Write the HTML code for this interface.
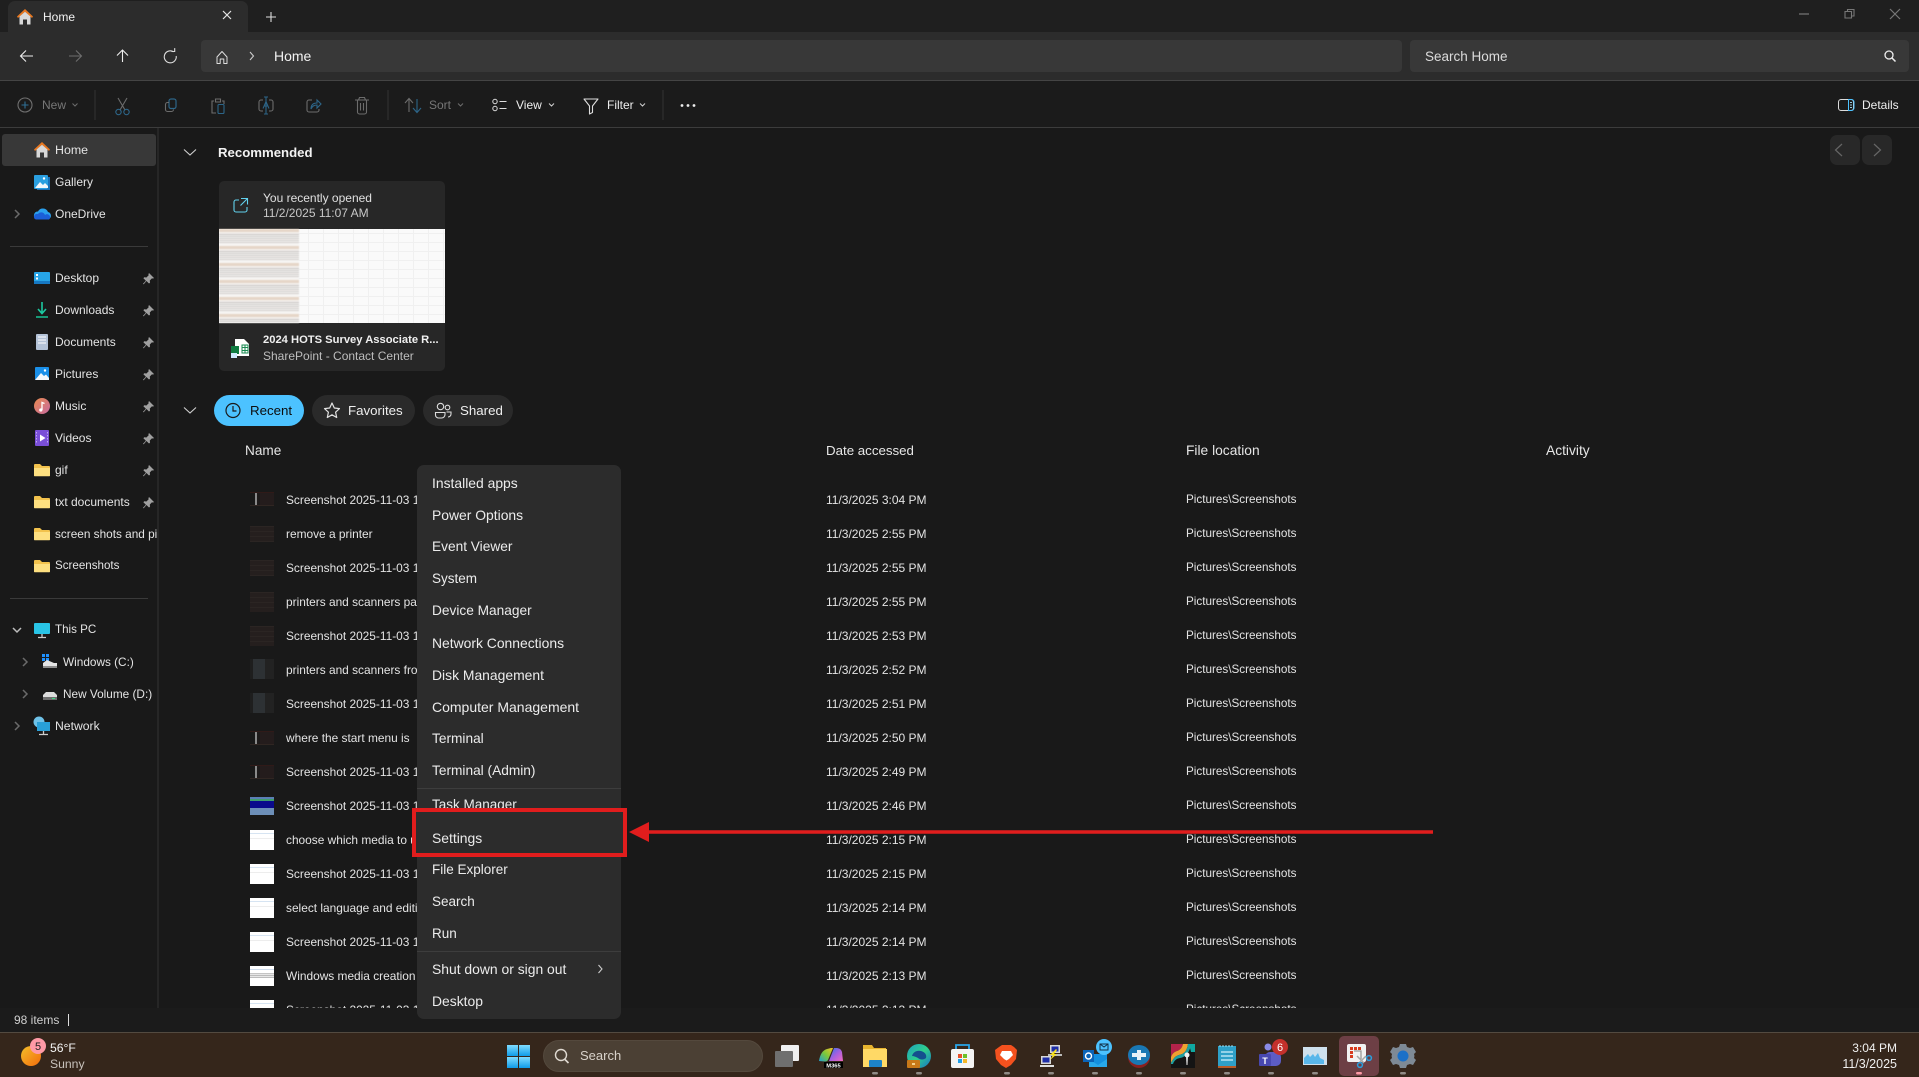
<!DOCTYPE html>
<html><head><meta charset="utf-8"><title>Home</title>
<style>
*{box-sizing:border-box;margin:0;padding:0}
html,body{width:1919px;height:1077px;overflow:hidden;background:#191919}
body{position:relative;font-family:"Liberation Sans",sans-serif;font-size:12px;color:#e4e4e4}
.b{position:absolute}
.t{position:absolute;line-height:16px;white-space:nowrap}
.r{position:absolute;left:0;width:1919px;height:34px}
.r span{position:absolute;top:9px;line-height:16px;white-space:nowrap}
.r .n{left:286px;width:135px;overflow:hidden;font-size:11.900px}
.r .d{left:826px}
.r .l{left:1186px;font-size:11.700px}
.r i{position:absolute;left:250px;display:block}
.dk{background:repeating-linear-gradient(180deg,#2b2523 0 1px,#251f1e 1px 5px);filter:blur(.3px)}
.gr{background:linear-gradient(90deg,#1e1e1e 0 3px,#2d3134 3px 15px,#222 15px 24px)}
.st{background:linear-gradient(90deg,#191919 0 5px,#8a8a8a 5px 7px,#1d1a1a 7px 10px,#241c1c 10px 24px);border-top:1px solid #301a18;border-bottom:1px solid #302622}
.wh{background:linear-gradient(180deg,#fff 0 3px,#d6e4f2 3px 4px,#fff 4px 8px,#ededed 8px 9px,#fff 9px 100%)}
.m{position:absolute;left:432px;line-height:16px;font-size:13.900px;color:#ececec;white-space:nowrap}
</style></head><body>

<!-- chrome -->
<div class="b" style="left:0;top:0;width:1919px;height:32px;background:#1f1f1f"></div>
<div class="b" style="left:8px;top:1px;width:240px;height:32px;background:#2c2c2c;border-radius:7px 7px 0 0"></div>
<div class="b" style="left:0;top:32px;width:1919px;height:48px;background:#2c2c2c"></div>
<div class="b" style="left:201px;top:40px;width:1201px;height:32px;background:#383838;border-radius:4px"></div>
<div class="b" style="left:1410px;top:40px;width:499px;height:32px;background:#383838;border-radius:4px"></div>
<div class="b" style="left:0;top:80px;width:1919px;height:1px;background:#444"></div>
<div class="b" style="left:0;top:81px;width:1919px;height:46px;background:#1b1b1b"></div>
<div class="b" style="left:0;top:127px;width:1919px;height:1px;background:#3c3c3c"></div>
<div class="b" style="left:157px;top:128px;width:2px;height:880px;background:#262626"></div>
<div class="b" style="left:2px;top:134px;width:154px;height:32px;background:#383838;border-radius:3px"></div>
<div class="b" style="left:10px;top:246px;width:138px;height:1px;background:#3a3a3a"></div>
<div class="b" style="left:10px;top:598px;width:138px;height:1px;background:#3a3a3a"></div>

<!-- card -->
<div class="b" style="left:219px;top:181px;width:226px;height:190px;background:#272727;border-radius:5px;overflow:hidden">
  <div class="b" style="left:0;top:48px;width:226px;height:94px;background:repeating-linear-gradient(90deg,transparent 0 14px,#f0f0f0 14px 15px),repeating-linear-gradient(0deg,#fafafa 0 8px,#f0f0f0 8px 9px)"></div>
  <div class="b" style="left:0;top:48px;width:80px;height:94px;filter:blur(.4px);background:repeating-linear-gradient(180deg,#e6d6c8 0 3px,#f2efec 3px 5px,#c9c6c4 5px 6px,#f2f0ee 6px 7px,#cfcdca 7px 8px,#f3f2f0 8px 9px,#cfccca 9px 10px,#f4f2f0 10px 11px,#d2cfcd 11px 12px,#f4f2f0 12px 13px,#d3d0ce 13px 14px,#f6f4f2 14px 17px)"></div>
</div>

<!-- pills -->
<div class="b" style="left:214px;top:395px;width:90px;height:31px;background:#4cc2ff;border-radius:16px"></div>
<div class="b" style="left:312px;top:395px;width:103px;height:31px;background:#2a2a2a;border-radius:16px"></div>
<div class="b" style="left:423px;top:395px;width:90px;height:31px;background:#2a2a2a;border-radius:16px"></div>

<!-- nav buttons -->
<div class="b" style="left:1830px;top:135px;width:30px;height:30px;background:#282828;border-radius:7px"></div>
<div class="b" style="left:1862px;top:135px;width:30px;height:30px;background:#282828;border-radius:7px"></div>

<!-- main icons -->
<svg class="b" style="left:0;top:0" width="1919" height="1077" viewBox="0 0 1919 1077" fill="none">
<defs>
<g id="folder"><path d="M0 3a1 1 0 0 1 1-1h5l2 2h7a1 1 0 0 1 1 1v8a1 1 0 0 1-1 1H1a1 1 0 0 1-1-1z" fill="#f2c24d"/><path d="M0 6h16v7.500a.8.8 0 0 1-.8.8H.8a.8.8 0 0 1-.8-.8z" fill="#fddf80"/></g>
<path id="pin" d="M6 0l5 5-1 .6-1-.4-2.200 2.300.2 2.200-1 .8-2.500-2.500L.6 11.400 0 10.800l2.900-3L.4 5.300l.8-1 2.200.2L5.700 2.200l-.3-1z" fill="#a0a0a0"/>
<g id="house"><path d="M8 0L16 7.500 15 9 8 2.800 1 9 0 7.500z" fill="#e8771f"/><path d="M2.500 7.500L8 2.800l5.500 4.700V15.500H10V10.500H6v5H2.500z" fill="#d8d8d8"/></g>
</defs>

<!-- tab/title -->
<use href="#house" x="17" y="9"/>
<path d="M223 11l8 8M231 11l-8 8" stroke="#e6e6e6" stroke-width="1.200"/>
<path d="M266 17h10M271 12v10" stroke="#dcdcdc" stroke-width="1.100"/>
<path d="M1799 14h10" stroke="#777" stroke-width="1.200"/>
<path d="M1845 11.500h6.500v6.500h-6.500zM1847.500 11.500v-2h6.500v6.500h-2.500" stroke="#777" stroke-width="1.100"/>
<path d="M1890 9l10 10M1900 9l-10 10" stroke="#777" stroke-width="1.200"/>

<!-- nav icons -->
<path d="M21 56h12M26 50.500L20.500 56 26 61.500" stroke="#eee" stroke-width="1.100"/>
<path d="M69 56h12M76 50.500L81.500 56 76 61.500" stroke="#6e6e6e" stroke-width="1.100"/>
<path d="M122.500 62V50M117 55.500l5.500-5.500 5.500 5.500" stroke="#eee" stroke-width="1.100"/>
<path d="M173.500 51.800a6 6 0 1 0 2.700 4.200M171.500 51.500h3.200v-3.400" stroke="#ddd" stroke-width="1.100"/>
<path d="M217 57l5-5.500 5 5.500v6.500h-3.200V59h-3.600v4.500H217z" stroke="#ddd" stroke-width="1" stroke-linejoin="round"/>
<path d="M250 52l3.500 4-3.500 4" stroke="#ccc" stroke-width="1.100"/>
<circle cx="1889" cy="55" r="4" stroke="#eee" stroke-width="1.300"/><path d="M1892 58l3.500 3.500" stroke="#eee" stroke-width="1.500"/>

<!-- toolbar icons -->
<circle cx="25" cy="105" r="7" stroke="#6f6f6f" stroke-width="1.100"/><path d="M21.500 105h7M25 101.500v7" stroke="#2f6f96" stroke-width="1.100"/>
<path d="M95 90v30M388 90v30M663 90v30" stroke="#333"/>
<path d="M118 98l7 12M127 98l-7 12" stroke="#6c6c6c" stroke-width="1.100"/><circle cx="118.500" cy="112" r="2.700" stroke="#2d6588" stroke-width="1.100"/><circle cx="126.500" cy="112" r="2.700" stroke="#2d6588" stroke-width="1.100"/>
<rect x="169" y="99" width="7" height="9.500" rx="2" stroke="#2d6588" stroke-width="1.200"/><path d="M169 102.500h-1.500a2 2 0 0 0-2 2v5a2 2 0 0 0 2 2h4a2 2 0 0 0 2-2" stroke="#6c6c6c" stroke-width="1.100"/>
<path d="M214 101h-2v12h4M222 101h2v3M215.500 99h5v3h-5z" stroke="#6c6c6c" stroke-width="1.100"/><rect x="218" y="104.500" width="6" height="9" rx="1" stroke="#2d6588" stroke-width="1.100"/>
<path d="M263 100h-2a2 2 0 0 0-2 2v7a2 2 0 0 0 2 2h2M269 100h2a2 2 0 0 1 2 2v7a2 2 0 0 1-2 2h-2" stroke="#6c6c6c" stroke-width="1.100"/><path d="M266 97v17M264 97h4M264 114h4" stroke="#2d6588" stroke-width="1.100"/><path d="M263 108.500l3-7 3 7M264 106h4" stroke="#2d6588" stroke-width="1"/>
<path d="M312 100h-3a2 2 0 0 0-2 2v8a2 2 0 0 0 2 2h8a2 2 0 0 0 2-2v-1" stroke="#6c6c6c" stroke-width="1.100"/><path d="M311 109c0-4 2-6 6-6v-3l4 4-4 4v-3c-3 0-4.500 1-6 4z" stroke="#2d6588" stroke-width="1.100"/>
<path d="M355 100h14M358.500 100l1-2.500h5l1 2.500M357.500 100v12a2 2 0 0 0 2 2h5a2 2 0 0 0 2-2v-12M360.500 103v7.500M363.500 103v7.500" stroke="#6c6c6c" stroke-width="1.100"/>
<path d="M409 112V99M405 103l4-4.500 4 4.500" stroke="#6c6c6c" stroke-width="1.100"/><path d="M417 99v13M413 108l4 4.500 4-4.500" stroke="#2d6588" stroke-width="1.100"/>
<circle cx="495" cy="101.500" r="2.200" stroke="#ddd"/><circle cx="495" cy="108.500" r="2.200" stroke="#ddd"/><path d="M499.500 101.500h7M499.500 108.500h7" stroke="#ddd" stroke-width="1.100"/>
<path d="M584 99h14l-5.500 7v6.500l-3 1.500v-8z" stroke="#ddd" stroke-width="1.100" stroke-linejoin="round"/>
<circle cx="682" cy="105.500" r="1.400" fill="#eee"/><circle cx="688" cy="105.500" r="1.400" fill="#eee"/><circle cx="694" cy="105.500" r="1.400" fill="#eee"/>
<path d="M72.500 103.500l2.500 2.500 2.500-2.500M458 103.500l2.500 2.500 2.500-2.500" stroke="#6c6c6c"/><path d="M549 103.500l2.500 2.500 2.500-2.500M640 103.500l2.500 2.500 2.500-2.500" stroke="#cfcfcf"/>
<rect x="1838.500" y="99.500" width="15" height="11" rx="2.500" stroke="#dcdcdc"/><path d="M1848.500 99.500h3a2.500 2.500 0 0 1 2.500 2.500v6a2.500 2.500 0 0 1-2.500 2.500h-3z" stroke="#4cc2ff"/><path d="M1850 102.500h2M1850 105h2M1850 107.500h2" stroke="#9cd" />

<!-- arrows recommended -->
<path d="M1842 144l-6.500 6 6.500 6" stroke="#666" stroke-width="1.200"/><path d="M1874 144l6.500 6-6.500 6" stroke="#666" stroke-width="1.200"/>
<path d="M184 149.500l6 5.500 6-5.500M184 407.500l6 5.500 6-5.500" stroke="#cfcfcf" stroke-width="1.100"/>

<!-- sidebar icons -->
<use href="#house" x="34" y="142"/>
<rect x="34" y="175" width="14" height="14" rx="1" fill="#2a9fe0"/><path d="M48 177h2v13H37v-1h11z" fill="#1a70b8"/><path d="M35 188l5-6 3 3 2-2 3 3v2H35z" fill="#f2f6fa"/><circle cx="44" cy="178.500" r="1.200" fill="#fff"/>
<path d="M36 219a4 4 0 0 1 2-7.500 5.500 5.500 0 0 1 10 0.500 3.800 3.800 0 0 1 1 7z" fill="#2aa0ee"/><path d="M34 217a3 3 0 0 1 4-3 4 4 0 0 1 7 1 3 3 0 0 1 5 2.500 2 2 0 0 1-1 2H36a2.500 2.500 0 0 1-2-2.500z" fill="#1b5fd8"/>
<path d="M15 210l4 4-4 4" stroke="#6a6a6a" stroke-width="1.500"/>
<rect x="34" y="272" width="16" height="12" rx="1" fill="#27a5e8"/><path d="M34 281h16v3H34z" fill="#1678c2"/><rect x="36" y="274" width="2" height="2" fill="#fff"/><rect x="36" y="277.500" width="2" height="2" fill="#fff"/>
<path d="M42 302v11M38 309l4 4.500 4-4.500" stroke="#1cc8a0" stroke-width="1.600"/><path d="M36 317h12" stroke="#18b98e" stroke-width="1.600"/>
<rect x="36" y="334" width="12" height="16" rx="1" fill="#b4c3d8"/><path d="M38 337h8M38 340h8M38 343h8" stroke="#fff" stroke-width="1.100"/>
<rect x="35" y="367" width="14" height="13" rx="1" fill="#1a8fe8"/><path d="M35 380l6-7 3 3 2-1.500 3 3.500v2z" fill="#f3f7fb"/><circle cx="45" cy="370.500" r="1.200" fill="#fff"/>
<defs><linearGradient id="mu" x1="0" y1="0" x2="1" y2="1"><stop offset="0" stop-color="#e88a4e"/><stop offset="1" stop-color="#c76aa0"/></linearGradient></defs>
<circle cx="42" cy="406" r="8" fill="url(#mu)"/><path d="M42 410V402.500l2.500 1" stroke="#fff" stroke-width="1.300"/><circle cx="40.800" cy="410" r="1.600" fill="#fff"/>
<rect x="35" y="430" width="14" height="16" rx="1" fill="#7a4fd8"/><path d="M40 434.500v7l5.500-3.500z" fill="#fff"/><path d="M36.500 432v12M47.500 432v12" stroke="#bfa8f0" stroke-dasharray="1.500 1.500"/>
<use href="#folder" x="34" y="462"/><use href="#folder" x="34" y="494"/><use href="#folder" x="34" y="526"/><use href="#folder" x="34" y="558"/>
<use href="#pin" x="143" y="273"/><use href="#pin" x="143" y="305"/><use href="#pin" x="143" y="337"/><use href="#pin" x="143" y="369"/><use href="#pin" x="143" y="401"/><use href="#pin" x="143" y="433"/><use href="#pin" x="143" y="465"/><use href="#pin" x="143" y="497"/>
<path d="M13 628l4 4 4-4" stroke="#bdbdbd" stroke-width="1.500"/>
<rect x="34" y="623" width="16" height="11" rx="1" fill="#29c4e6"/><path d="M42 634v3M38 637.500h8" stroke="#ccc" stroke-width="1.300"/>
<path d="M23 658l4 4-4 4M23 690l4 4-4 4M15 722l4 4-4 4" stroke="#6a6a6a" stroke-width="1.500"/>
<rect x="42" y="654" width="3" height="3" fill="#1e90ff"/><rect x="46" y="654" width="3" height="3" fill="#1e90ff"/><rect x="42" y="658" width="3" height="3" fill="#1e90ff"/><rect x="46" y="658" width="3" height="3" fill="#1e90ff"/>
<path d="M47 660l7 3h3v5H43v-5z" fill="#e4e4e4"/><path d="M43 666h14v2H43z" fill="#8d8d8d"/>
<path d="M46 692h8l3 3v5H43v-5z" fill="#dcdcdc"/><path d="M43 697h14v3H43z" fill="#6e6e6e"/><path d="M52 698.500h3" stroke="#3ddc84"/>
<circle cx="39" cy="722" r="5.500" fill="#6fc2e8"/><rect x="37" y="722" width="13" height="9" fill="#29a0d8"/><path d="M43.500 731v3M39 734.500h9" stroke="#ccc" stroke-width="1.300"/>

<!-- card icons -->
<path d="M239 200h-3a2 2 0 0 0-2 2v8a2 2 0 0 0 2 2h9a2 2 0 0 0 2-2v-3M241 198.500h6.500v6M247.500 198.500l-7 7" stroke="#62d2ee" stroke-width="1.100"/>
<path d="M235 339h9l5 5v12h-14z" fill="#fff"/><rect x="231" y="346" width="8" height="8" fill="#107c41"/><rect x="231" y="353" width="6" height="5" fill="#cfeaff"/><path d="M242 345h6v8h-6zM242 347.500h6M242 350.500h6M245 345v8" stroke="#1a8a50"/>

<!-- pill icons -->
<circle cx="233" cy="410.500" r="7" stroke="#1a1a1a" stroke-width="1.200"/><path d="M233 406v5h3.500" stroke="#1a1a1a" stroke-width="1.200"/>
<path d="M332 403l2.300 5 5.200.6-3.900 3.600 1.100 5.300-4.700-2.700-4.700 2.700 1.100-5.300-3.900-3.600 5.200-.6z" stroke="#e2e2e2" stroke-width="1.200" stroke-linejoin="round"/>
<circle cx="440.500" cy="406.500" r="3.200" stroke="#ddd" stroke-width="1.100"/><circle cx="447.500" cy="407.500" r="2.300" stroke="#ddd" stroke-width="1.100"/><path d="M435.500 412.500h9.500v2a3.500 3.500 0 0 1-3.500 3.500h-3a3 3 0 0 1-3-3zM446.500 412h4.500v2a3 3 0 0 1-3 3" stroke="#ddd" stroke-width="1.100"/>
</svg>

<!-- title/nav text -->
<div class="t" style="left:43px;top:9px;color:#f2f2f2">Home</div>
<div class="t" style="left:274px;top:48px;font-size:14px;color:#f2f2f2">Home</div>
<div class="t" style="left:1425px;top:49px;font-size:13.500px;color:#dcdcdc">Search Home</div>

<!-- toolbar text -->
<div class="t" style="left:42px;top:97px;color:#777">New</div>
<div class="t" style="left:429px;top:97px;color:#777">Sort</div>
<div class="t" style="left:516px;top:97px;color:#eee">View</div>
<div class="t" style="left:607px;top:97px;color:#eee">Filter</div>
<div class="t" style="left:1862px;top:97px;color:#eee">Details</div>

<!-- sidebar text -->
<div class="t" style="left:55px;top:142px;font-size:12.400px">Home</div>
<div class="t" style="left:55px;top:174px">Gallery</div>
<div class="t" style="left:55px;top:206px">OneDrive</div>
<div class="t" style="left:55px;top:270px">Desktop</div>
<div class="t" style="left:55px;top:302px">Downloads</div>
<div class="t" style="left:55px;top:334px">Documents</div>
<div class="t" style="left:55px;top:366px">Pictures</div>
<div class="t" style="left:55px;top:398px">Music</div>
<div class="t" style="left:55px;top:430px">Videos</div>
<div class="t" style="left:55px;top:462px">gif</div>
<div class="t" style="left:55px;top:494px">txt documents</div>
<div class="t" style="left:55px;top:526px;width:102px;overflow:hidden;font-size:11.800px">screen shots and pictures</div>
<div class="t" style="left:55px;top:558px;font-size:11.600px">Screenshots</div>
<div class="t" style="left:55px;top:622px;font-size:11.600px">This PC</div>
<div class="t" style="left:63px;top:654px;font-size:11.800px">Windows (C:)</div>
<div class="t" style="left:63px;top:686px;font-size:11.800px">New Volume (D:)</div>
<div class="t" style="left:55px;top:718px;font-size:12.200px">Network</div>

<!-- content heading -->
<div class="t" style="left:218px;top:145px;font-weight:bold;font-size:13.200px;color:#f2f2f2">Recommended</div>
<div class="t" style="left:263px;top:190px;color:#e0e0e0">You recently opened</div>
<div class="t" style="left:263px;top:205px;color:#c8c8c8">11/2/2025 11:07 AM</div>
<div class="t" style="left:263px;top:332px;font-weight:bold;font-size:11.200px;color:#f0f0f0">2024 HOTS Survey Associate R...</div>
<div class="t" style="left:263px;top:348px;color:#bdbdbd">SharePoint - Contact Center</div>
<div class="t" style="left:250px;top:403px;font-size:13.300px;color:#0d0d0d">Recent</div>
<div class="t" style="left:348px;top:403px;font-size:13.300px;color:#eee">Favorites</div>
<div class="t" style="left:460px;top:403px;font-size:13.300px;color:#eee">Shared</div>
<div class="t" style="left:245px;top:443px;font-size:13.600px;color:#e6e6e6">Name</div>
<div class="t" style="left:826px;top:443px;font-size:13.300px;color:#e6e6e6">Date accessed</div>
<div class="t" style="left:1186px;top:443px;font-size:13.800px;color:#e6e6e6">File location</div>
<div class="t" style="left:1546px;top:443px;font-size:13.800px;color:#e6e6e6">Activity</div>

<!-- rows -->
<div class="b" style="left:0;top:483px;width:1919px;height:525px;overflow:hidden">
<div class="r" style="top:0"><i class="st" style="top:9px;width:24px;height:14px"></i><span class="n">Screenshot 2025-11-03 150431</span><span class="d">11/3/2025 3:04 PM</span><span class="l">Pictures\Screenshots</span></div>
<div class="r" style="top:34px"><i class="dk" style="top:9px;width:24px;height:16px"></i><span class="n">remove a printer</span><span class="d">11/3/2025 2:55 PM</span><span class="l">Pictures\Screenshots</span></div>
<div class="r" style="top:68px"><i class="dk" style="top:9px;width:24px;height:16px"></i><span class="n">Screenshot 2025-11-03 145531</span><span class="d">11/3/2025 2:55 PM</span><span class="l">Pictures\Screenshots</span></div>
<div class="r" style="top:102px"><i class="dk" style="top:7px;width:24px;height:20px"></i><span class="n">printers and scanners page</span><span class="d">11/3/2025 2:55 PM</span><span class="l">Pictures\Screenshots</span></div>
<div class="r" style="top:136px"><i class="dk" style="top:7px;width:24px;height:20px"></i><span class="n">Screenshot 2025-11-03 145331</span><span class="d">11/3/2025 2:53 PM</span><span class="l">Pictures\Screenshots</span></div>
<div class="r" style="top:170px"><i class="gr" style="top:6px;width:24px;height:20px"></i><span class="n">printers and scanners from</span><span class="d">11/3/2025 2:52 PM</span><span class="l">Pictures\Screenshots</span></div>
<div class="r" style="top:204px"><i class="gr" style="top:6px;width:24px;height:20px"></i><span class="n">Screenshot 2025-11-03 145131</span><span class="d">11/3/2025 2:51 PM</span><span class="l">Pictures\Screenshots</span></div>
<div class="r" style="top:238px"><i class="st" style="top:10px;width:24px;height:14px"></i><span class="n">where the start menu is</span><span class="d">11/3/2025 2:50 PM</span><span class="l">Pictures\Screenshots</span></div>
<div class="r" style="top:272px"><i class="st" style="top:10px;width:24px;height:14px"></i><span class="n">Screenshot 2025-11-03 144931</span><span class="d">11/3/2025 2:49 PM</span><span class="l">Pictures\Screenshots</span></div>
<div class="r" style="top:306px"><i style="top:8px;width:24px;height:18px;background:linear-gradient(180deg,#5b7fb5 0 2px,#3f9c6e 2px 4px,#0a0a8c 4px 11px,#6d8fb8 11px 100%)"></i><span class="n">Screenshot 2025-11-03 144631</span><span class="d">11/3/2025 2:46 PM</span><span class="l">Pictures\Screenshots</span></div>
<div class="r" style="top:340px"><i class="wh" style="top:7px;width:24px;height:20px"></i><span class="n">choose which media to use</span><span class="d">11/3/2025 2:15 PM</span><span class="l">Pictures\Screenshots</span></div>
<div class="r" style="top:374px"><i class="wh" style="top:7px;width:24px;height:20px"></i><span class="n">Screenshot 2025-11-03 141531</span><span class="d">11/3/2025 2:15 PM</span><span class="l">Pictures\Screenshots</span></div>
<div class="r" style="top:408px"><i class="wh" style="top:7px;width:24px;height:20px"></i><span class="n">select language and edition</span><span class="d">11/3/2025 2:14 PM</span><span class="l">Pictures\Screenshots</span></div>
<div class="r" style="top:442px"><i class="wh" style="top:7px;width:24px;height:20px"></i><span class="n">Screenshot 2025-11-03 141431</span><span class="d">11/3/2025 2:14 PM</span><span class="l">Pictures\Screenshots</span></div>
<div class="r" style="top:476px"><i style="top:7px;width:24px;height:20px;background:linear-gradient(180deg,#fff 0 3px,#cfdcec 3px 4px,#fff 4px 7px,#c4c4c4 7px 8px,#e6e6e6 8px 9px,#bbb 9px 10px,#e6e6e6 10px 11px,#bbb 11px 12px,#fff 12px 100%)"></i><span class="n">Windows media creation</span><span class="d">11/3/2025 2:13 PM</span><span class="l">Pictures\Screenshots</span></div>
<div class="r" style="top:510px"><i class="wh" style="top:7px;width:24px;height:20px"></i><span class="n">Screenshot 2025-11-03 141331</span><span class="d">11/3/2025 2:13 PM</span><span class="l">Pictures\Screenshots</span></div>
</div>

<!-- status -->
<div class="b" style="left:0;top:1008px;width:1919px;height:24px;background:#1b1b1b"></div>
<div class="t" style="left:14px;top:1012px;color:#cfcfcf">98 items</div>
<div class="b" style="left:68px;top:1014px;width:1px;height:12px;background:#ddd"></div>

<!-- context menu -->
<div class="b" style="left:417px;top:465px;width:204px;height:554px;background:#2c2c2c;border-radius:7px"></div>
<div class="m" style="top:475px">Installed apps</div>
<div class="m" style="top:507px">Power Options</div>
<div class="m" style="top:539px;font-size:13.700px">Event Viewer</div>
<div class="m" style="top:571px;font-size:13.500px">System</div>
<div class="m" style="top:603px;font-size:13.700px">Device Manager</div>
<div class="m" style="top:635px">Network Connections</div>
<div class="m" style="top:667px">Disk Management</div>
<div class="m" style="top:699px;font-size:14px">Computer Management</div>
<div class="m" style="top:731px;font-size:13.700px">Terminal</div>
<div class="m" style="top:763px;font-size:13.700px">Terminal (Admin)</div>
<div class="b" style="left:417px;top:788px;width:204px;height:1px;background:#3d3d3d"></div>
<div class="m" style="top:797px;font-size:13.500px">Task Manager</div>
<div class="b" style="left:412px;top:808px;width:215px;height:49px;background:#2c2c2c;border:4px solid #e11d1d"></div>
<div class="m" style="top:830px">Settings</div>
<div class="m" style="top:862px;font-size:13.500px">File Explorer</div>
<div class="m" style="top:894px;font-size:13.500px">Search</div>
<div class="m" style="top:926px;font-size:13.500px">Run</div>
<div class="b" style="left:417px;top:951px;width:204px;height:1px;background:#3d3d3d"></div>
<div class="m" style="top:961px">Shut down or sign out</div>
<div class="m" style="top:993px">Desktop</div>

<svg class="b" style="left:0;top:0" width="1919" height="1077" viewBox="0 0 1919 1077" fill="none">
<path d="M598.500 965l3.500 4-3.500 4" stroke="#ccc" stroke-width="1.100"/>
<path d="M629 832l20-10v8.200h784v3.600H649v8.200z" fill="#e11d1d"/>
</svg>

<!-- taskbar -->
<div class="b" style="left:0;top:1032px;width:1919px;height:45px;background:#35261b;border-top:1px solid #534a40"></div>
<div class="b" style="left:543px;top:1040px;width:220px;height:32px;background:#4b4034;border-radius:16px;border:1px solid #54493d"></div>
<div class="b" style="left:1339px;top:1036px;width:40px;height:40px;background:#6d3f45;border-radius:5px"></div>
<div class="t" style="left:50px;top:1040px;color:#f4f4f4;font-size:12.200px">56°F</div>
<div class="t" style="left:50px;top:1056px;color:#c8c2bc;font-size:12.200px">Sunny</div>
<div class="t" style="left:580px;top:1048px;font-size:13px;color:#d8d2ca">Search</div>
<div class="t" style="right:22px;top:1040px;color:#f0f0f0;text-align:right">3:04 PM</div>
<div class="t" style="right:22px;top:1056px;color:#f0f0f0;text-align:right;font-size:12.500px">11/3/2025</div>

<svg class="b" style="left:0;top:0" width="1919" height="1077" viewBox="0 0 1919 1077" fill="none">
<defs>
<linearGradient id="sun" x1="0" y1="0" x2="1" y2="1"><stop offset="0" stop-color="#f5c02a"/><stop offset="1" stop-color="#f26b0c"/></linearGradient>
<linearGradient id="win" x1="0" y1="0" x2="0" y2="1"><stop offset="0" stop-color="#7fdcff"/><stop offset="1" stop-color="#0f9be8"/></linearGradient>
<linearGradient id="edg" x1="0" y1="0" x2="1" y2="1"><stop offset="0" stop-color="#1da0c0"/><stop offset=".5" stop-color="#2fd08c"/><stop offset="1" stop-color="#1670c8"/></linearGradient>
<linearGradient id="lb" x1="0" y1="1" x2="1" y2="0"><stop offset="0" stop-color="#1f9fd8"/><stop offset=".5" stop-color="#7cc83a"/><stop offset="1" stop-color="#f2c22a"/></linearGradient>
<linearGradient id="rb" x1="0" y1="0" x2="1" y2="1"><stop offset="0" stop-color="#2a78e4"/><stop offset=".5" stop-color="#a65fe0"/><stop offset="1" stop-color="#f06ac0"/></linearGradient>
</defs>
<circle cx="31" cy="1056" r="10" fill="url(#sun)"/><circle cx="38" cy="1046" r="8" fill="#ff9aa6"/>
<text x="38" y="1050" font-family="Liberation Sans" font-size="11" fill="#222" text-anchor="middle">5</text>

<rect x="507" y="1045" width="11" height="11" fill="url(#win)"/><rect x="519" y="1045" width="11" height="11" fill="url(#win)"/><rect x="507" y="1057" width="11" height="11" fill="url(#win)"/><rect x="519" y="1057" width="11" height="11" fill="url(#win)"/>
<circle cx="561" cy="1055" r="5.500" stroke="#e0dad2" stroke-width="1.400"/><path d="M565 1059.500l3.500 3.500" stroke="#e0dad2" stroke-width="1.600"/>

<!-- task view -->
<rect x="781" y="1045" width="18" height="16" rx="1" fill="#f0f0f0"/><rect x="775" y="1051" width="18" height="16" rx="1" fill="#6f6f6f"/>
<!-- m365 -->
<path d="M819 1061c1-7 4-11 8-12l4-1h2l-5 12c-.5 1-1.500 1.500-3 1.500z" fill="url(#lb)"/><path d="M829 1061l5-13h2c3 0 5 1 6 4l1 9z" fill="url(#rb)"/>
<rect x="824" y="1062" width="19" height="6" fill="#000"/><text x="833.500" y="1067.300" font-family="Liberation Sans" font-size="5.800" font-weight="bold" fill="#fff" text-anchor="middle">M365</text>
<!-- explorer -->
<path d="M863 1045h9l2 3h12v19h-23z" fill="#e9b52f"/><rect x="863" y="1049" width="24" height="18" fill="#ffd966"/><rect x="869" y="1060" width="13" height="7" rx="1" fill="#1d83c8"/>
<!-- edge -->
<circle cx="919" cy="1056" r="12" fill="url(#edg)"/><path d="M912 1056c1-4 5-6 9-5s6 4 5 7c-2 2-6 2-8 0-2-1-4-2-6-2z" fill="#14508e"/><rect x="907" y="1060" width="13" height="8" rx="1" fill="#c87818"/><rect x="912" y="1063" width="3" height="2" fill="#f4d08a"/>
<!-- store -->
<rect x="951" y="1049" width="23" height="19" rx="2" fill="#f4f4f4"/><path d="M956 1049v-4h13v4" stroke="#29a5e8" stroke-width="1.800"/><rect x="958" y="1054" width="4" height="4" fill="#e8502a"/><rect x="963" y="1054" width="4" height="4" fill="#6cc02a"/><rect x="958" y="1059" width="4" height="4" fill="#1ea0ea"/><rect x="963" y="1059" width="4" height="4" fill="#f4b82a"/>
<!-- brave -->
<path d="M999 1047l3-2h9l3 2 3 3-1 9-5 6-5 3-5-3-5-6-1-9z" fill="#f4511e"/><path d="M1002 1051h9l2 4-4 4-2.500 1.500-2.500-1.500-4-4z" fill="#fff"/>
<!-- putty -->
<rect x="1050" y="1045" width="10" height="8" fill="#d8d8d8"/><rect x="1051.500" y="1046.500" width="7" height="5" fill="#1e2ea8"/><path d="M1048 1054h14v2h-14z" fill="#bbb"/>
<rect x="1041" y="1056" width="10" height="8" fill="#d8d8d8"/><rect x="1042.500" y="1057.500" width="7" height="5" fill="#1e2ea8"/><path d="M1040 1065h14v2h-14z" fill="#e0e0e0"/>
<path d="M1056 1049l-6 6h3l-3 5 7-6h-3l3-4z" fill="#f7e01c"/>
<!-- outlook -->
<rect x="1089" y="1054" width="18" height="13" fill="#1490df"/><path d="M1089 1059l9 6 9-6v8h-18z" fill="#28a8ea"/><rect x="1083" y="1050" width="11" height="12" fill="#0a64b8"/><circle cx="1088.500" cy="1056" r="3" stroke="#fff" stroke-width="1.400"/>
<circle cx="1104" cy="1047" r="8" fill="#4cc2ff"/><rect x="1100" y="1044" width="8" height="6" stroke="#12324a"/><path d="M1100 1044l4 3 4-3" stroke="#12324a"/>
<!-- blue plus -->
<ellipse cx="1139" cy="1057" rx="11" ry="11" fill="#8a2020"/><ellipse cx="1139" cy="1055" rx="11" ry="10" fill="#1a78b4"/><path d="M1132 1055h14M1139 1050v10" stroke="#e8f2f8" stroke-width="4"/>
<!-- colourful -->
<rect x="1171" y="1044" width="24" height="24" fill="#141414"/><path d="M1171 1044h12c-1 4-3 6-6 7-3 1-5 3-6 6z" fill="#b4234a"/><path d="M1171 1057c1-3 3-5 6-6 3-1 5-3 6-7h5c-1 7-4 10-9 11-4 1-6 4-8 8z" fill="#f0a030"/><path d="M1171 1063c2-4 4-7 8-8 5-1 8-4 9-11h3c-1 8-5 13-11 14-4 .7-6 3-7 6h-2z" fill="#1ea0a0"/><path d="M1189 1044h6v8h-4z" fill="#10a8a0"/><circle cx="1187" cy="1055" r="2.500" fill="#eee"/><path d="M1186 1057h2l-.5 8h-1z" fill="#ddd"/>
<!-- notepad -->
<rect x="1218" y="1046" width="18" height="22" fill="#2ea0c8"/><path d="M1221 1052h12M1221 1056h12M1221 1060h12" stroke="#d0f0fa" stroke-width="1.200"/><rect x="1218" y="1066" width="18" height="2" fill="#b85c28"/><path d="M1220 1045v2M1223 1045v2M1226 1045v2M1229 1045v2M1232 1045v2" stroke="#9ce0f4"/>
<!-- teams -->
<circle cx="1268" cy="1047" r="3.500" fill="#8a8ae6"/><rect x="1265" y="1052" width="16" height="14" rx="5" fill="#5c5cc4"/><rect x="1259" y="1054" width="12" height="12" rx="1" fill="#4848b0"/>
<text x="1265" y="1064" font-family="Liberation Sans" font-size="9" font-weight="bold" fill="#fff" text-anchor="middle">T</text>
<circle cx="1280" cy="1047" r="8" fill="#c4302b"/><text x="1280" y="1051" font-family="Liberation Sans" font-size="11" fill="#fff" text-anchor="middle">6</text>
<!-- perf -->
<rect x="1303" y="1047" width="24" height="18" fill="#cfe0ec"/><path d="M1304 1064v-6l4-4 2 3 3-3 2 3 3-4 2 5 4 2v4z" fill="#59b7ea"/>
<!-- snip -->
<rect x="1347" y="1044" width="19" height="18" rx="2" fill="#f2f2f2"/><path d="M1350 1047h3v3h-3zM1354 1047h3v3h-3zM1358 1047h3v3h-3zM1350 1051h3v3h-3zM1350 1055h3v3h-3z" fill="#d83b1e"/><path d="M1354 1051h7v8" stroke="#999" stroke-width="1.300"/>
<path d="M1357 1056l7 7M1366 1056l-7 7" stroke="#a8a8a8" stroke-width="1.500"/><circle cx="1369" cy="1058" r="2.400" stroke="#29a0e0" stroke-width="1.500"/><circle cx="1360" cy="1065" r="2.400" stroke="#29a0e0" stroke-width="1.500"/>
<!-- settings -->
<path d="M1400 1044h6l1 3 3 1 3-1 3 5-2 2 .5 2-.5 2 2 2-3 5-3-1-3 1-1 3h-6l-1-3-3-1-3 1-3-5 2-2-.5-2 .5-2-2-2 3-5 3 1 3-1z" fill="#7e8a96"/><circle cx="1403" cy="1056" r="5.500" fill="#1a70c8"/>
<!-- running dots -->
<g fill="#8f8a85"><rect x="872" y="1072" width="6" height="2.500" rx="1.200"/><rect x="916" y="1072" width="6" height="2.500" rx="1.200"/><rect x="1004" y="1072" width="6" height="2.500" rx="1.200"/><rect x="1048" y="1072" width="6" height="2.500" rx="1.200"/><rect x="1092" y="1072" width="6" height="2.500" rx="1.200"/><rect x="1136" y="1072" width="6" height="2.500" rx="1.200"/><rect x="1180" y="1072" width="6" height="2.500" rx="1.200"/><rect x="1224" y="1072" width="6" height="2.500" rx="1.200"/><rect x="1268" y="1072" width="6" height="2.500" rx="1.200"/><rect x="1312" y="1072" width="6" height="2.500" rx="1.200"/><rect x="1400" y="1072" width="6" height="2.500" rx="1.200"/></g>
<rect x="1356" y="1072" width="6" height="2.500" rx="1.200" fill="#ff9aa6"/>
</svg>
</body></html>
